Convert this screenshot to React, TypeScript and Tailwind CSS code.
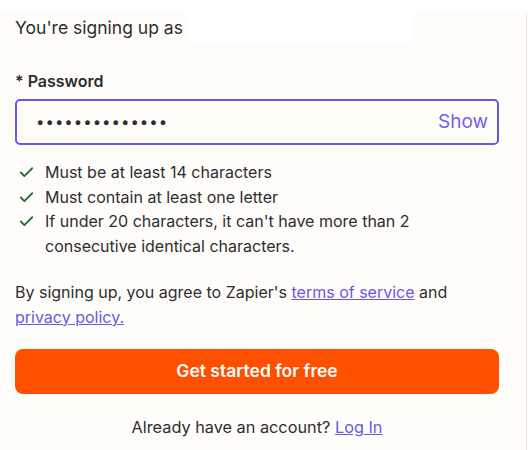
import { Check } from 'lucide-react';

const rules = [
  'Must be at least 14 characters',
  'Must contain at least one letter',
  "If under 20 characters, it can't have more than 2 consecutive identical characters.",
];

export default function App() {
  return (
    <div className="w-[528px] h-[450px] bg-white overflow-hidden" style={{ fontFamily: 'Inter, "Noto Sans", sans-serif' }}>
      <div className="w-[527px] h-full bg-[#fffdf9] border-r border-[#ebe7df]">
        <div className="w-[484px] ml-[15px] text-[#2d2e2e]">
          {/* Signing up as */}
          <div className="flex items-center h-[33px] mt-[12px] text-[17.5px]">
            <span>You're signing up as</span>
            <div className="ml-[4px] w-[226px] h-[33px] bg-white" />
          </div>

          {/* Password */}
          <label className="block mt-[26px] text-[16px] font-semibold leading-[20px]">* Password</label>
          <div className="mt-[8px] h-[46px] border-2 border-[#6659e6] rounded-[5px] flex items-center justify-between pl-[19px] pr-[9px]">
            <span className="text-[15px] tracking-[1px] text-[#2d2e2e]">••••••••••••••</span>
            <span className="text-[19px] text-[#6f63e8]">Show</span>
          </div>

          {/* Rules */}
          <ul className="mt-[15px] text-[16px] leading-[24.7px]">
            {rules.map((r) => (
              <li key={r} className="flex items-start">
                <Check className="w-[17px] h-[17px] mt-[4px] ml-[3px] mr-[10px] shrink-0 text-[#1f6b36]" strokeWidth={2.5} />
                <span className="w-[375px]">{r}</span>
              </li>
            ))}
          </ul>

          {/* Terms */}
          <p className="mt-[21px] text-[16px] leading-[25px]">
            By signing up, you agree to Zapier's{' '}
            <a className="text-[#6659e6] underline">terms of service</a> and{' '}
            <a className="text-[#6659e6] underline">privacy policy.</a>
          </p>

          {/* CTA */}
          <button className="mt-[19px] w-full h-[45px] rounded-[8px] bg-[#ff4f00] text-white text-[17.5px] font-semibold">
            Get started for free
          </button>

          <p className="mt-[21px] text-center text-[16.3px]">
            Already have an account? <a className="text-[#6659e6] underline">Log In</a>
          </p>
        </div>
      </div>
    </div>
  );
}
